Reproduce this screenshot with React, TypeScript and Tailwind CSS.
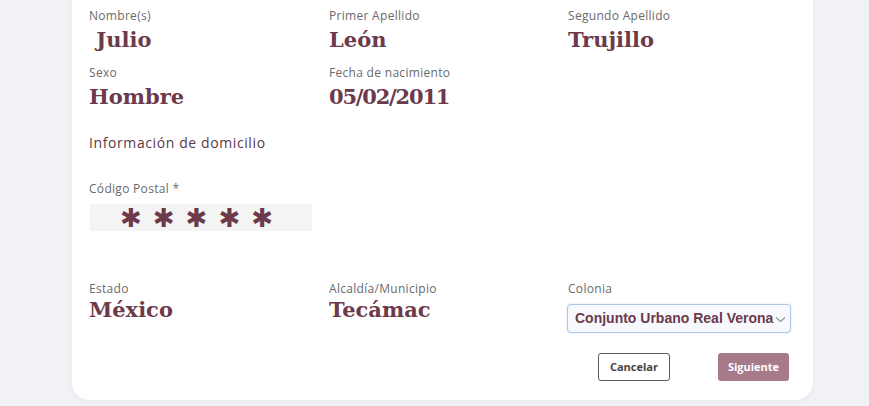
import React from "react";

const Label = ({ children }: { children: React.ReactNode }) => (
  <div className="text-[12px] leading-[14px] tracking-[0.3px] text-[#6a6a6a] font-['Open_Sans',sans-serif] font-medium">
    {children}
  </div>
);

const Value = ({ children, className = "" }: { children: React.ReactNode; className?: string }) => (
  <div
    className={
      "text-[21px] leading-[24px] font-bold text-[#6c3a4b] font-['DejaVu_Serif',serif] whitespace-pre " +
      className
    }
  >
    {children}
  </div>
);

export default function App() {
  return (
    <div className="min-h-[406px] bg-[#f1f2f6] font-['Open_Sans',sans-serif]">
      <div className="ml-[72px] w-[741px] h-[400px] bg-white rounded-b-[18px] shadow-[0_2px_6px_rgba(0,0,0,0.04)] pl-[17px] pr-[22px]">
        <div className="grid grid-cols-[240px_239px_1fr] pt-[9px]">
          <div>
            <Label>Nombre(s)</Label>
            <Value className="mt-[5px]"> Julio</Value>
          </div>
          <div>
            <Label>Primer Apellido</Label>
            <Value className="mt-[5px]">León</Value>
          </div>
          <div>
            <Label>Segundo Apellido</Label>
            <Value className="mt-[5px]">Trujillo</Value>
          </div>
        </div>
        <div className="grid grid-cols-[240px_239px_1fr] mt-[14px]">
          <div>
            <Label>Sexo</Label>
            <Value className="mt-[5px]">Hombre</Value>
          </div>
          <div>
            <Label>Fecha de nacimiento</Label>
            <Value className="mt-[5px] tracking-[-1.2px]">05/02/2011</Value>
          </div>
          <div />
        </div>

        <div className="mt-[24px] text-[14px] leading-[20px] tracking-[0.6px] text-[#5b3a46] font-medium">
          Información de domicilio
        </div>

        <div className="mt-[29px]">
          <Label>Código Postal *</Label>
          <div className="mt-[8px] ml-[1px] w-[222px] h-[27px] bg-[#f4f4f4] rounded-[2px] flex items-center pl-[30px] gap-[11px]">
            {[0, 1, 2, 3, 4].map((i) => (
              <span
                key={i}
                className="text-[26px] leading-[26px] text-[#6c3a4b] font-['DejaVu_Sans',sans-serif]"
              >
                ✱
              </span>
            ))}
          </div>
        </div>

        <div className="grid grid-cols-[240px_239px_1fr] mt-[51px]">
          <div>
            <Label>Estado</Label>
            <Value className="mt-[2px]">México</Value>
          </div>
          <div>
            <Label>Alcaldía/Municipio</Label>
            <Value className="mt-[2px]">Tecámac</Value>
          </div>
          <div>
            <Label>Colonia</Label>
            <div className="mt-[8px] -ml-[1px] w-[224px] h-[29px] border border-[#abc9ea] bg-[#f7f9fc] rounded-[4px] flex items-center pl-[7px] pr-[8px] shadow-[0_0_2px_rgba(120,160,210,0.35)]">
              <span className="text-[14px] font-bold text-[#6c3a4b] font-['Liberation_Sans',sans-serif] whitespace-nowrap">
                Conjunto Urbano Real Verona
              </span>
              <svg width="11" height="7" viewBox="0 0 11 7" className="ml-[2px] mt-[2px] shrink-0">
                <path d="M1 1.5l4.5 4 4.5-4" fill="none" stroke="#9a9a9a" strokeWidth="1.3" />
              </svg>
            </div>
          </div>
        </div>

        <div className="flex justify-end pr-[2px] mt-[20px] gap-[48px]">
          <button className="w-[72px] h-[28px] border border-[#5a5a5a] rounded-[3px] bg-white text-[11px] font-bold text-[#444] font-['Open_Sans',sans-serif]">
            Cancelar
          </button>
          <button className="w-[71px] h-[28px] rounded-[3px] bg-[#a67a89] text-[11px] font-bold text-white font-['Open_Sans',sans-serif]">
            Siguiente
          </button>
        </div>
      </div>
    </div>
  );
}
